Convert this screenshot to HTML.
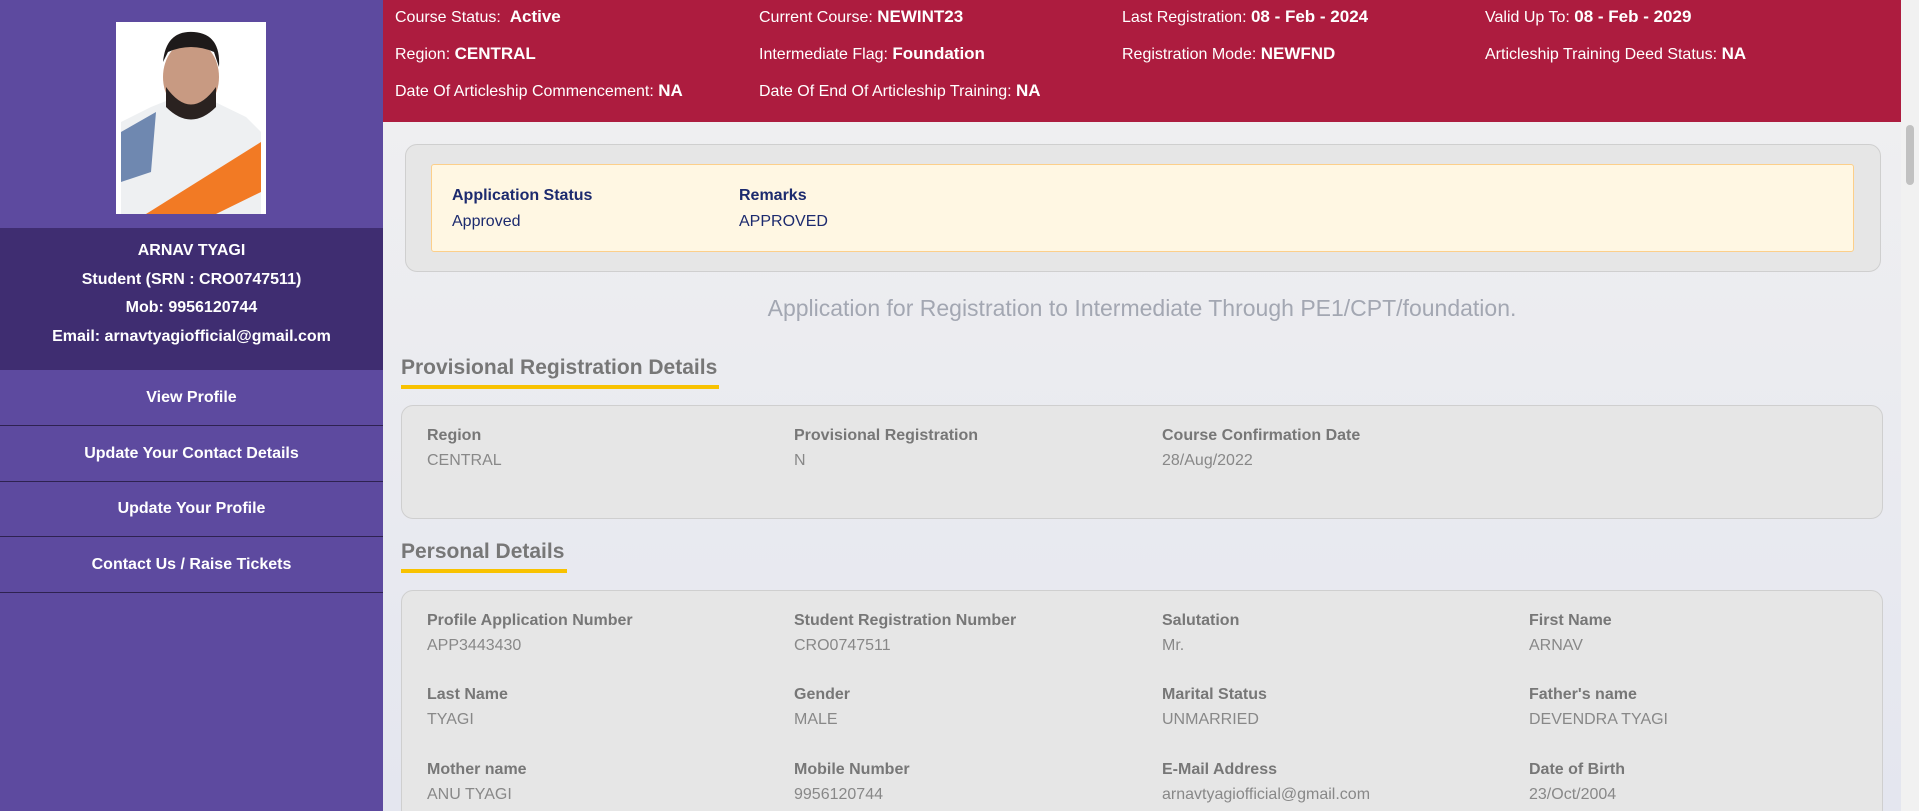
<!DOCTYPE html>
<html style="overflow:hidden;width:1919px;height:811px"><head><meta charset="utf-8"><style>
*{margin:0;padding:0;box-sizing:border-box}
body{width:1919px;height:811px;overflow:hidden;font-family:"Liberation Sans",Arial,sans-serif;background:#e9e9ef;position:relative}
.side{position:absolute;left:0;top:0;width:383px;height:811px;background:#5d4a9f}
.photo{position:absolute;left:116px;top:22px;width:150px;height:192px;background:#fff}
.info{position:absolute;left:0;top:228px;width:383px;height:142px;background:#3f2d71;color:#fff;font-weight:bold;font-size:16px;text-align:center}
.info div{position:absolute;width:100%}
.menu{position:absolute;left:0;width:383px;height:56px;border-bottom:1.5px solid #2e2250;color:#fff;font-weight:bold;font-size:16px;text-align:center;line-height:56px}
.hdr{position:absolute;left:383px;top:0;width:1518px;height:122px;background:#ad1c3f;color:#fff;font-size:16px}
.hdr span{position:absolute;white-space:nowrap}
.hdr b{font-size:17px}
.main{position:absolute;left:383px;top:122px;width:1518px;height:689px;background:linear-gradient(#efeff1,#e4e6ef)}
.sb{position:absolute;left:1901px;top:0;width:18px;height:811px;background:#f1f1f1}
.sb div{position:absolute;left:5px;top:125px;width:8px;height:60px;background:#c1c1c1;border-radius:4px}
.box{position:absolute;background:#e6e6e6;border:1.5px solid #cfcfcf;border-radius:12px}
.t{position:absolute;white-space:nowrap;font-size:16px}
.l{font-weight:bold;color:#777}
.v{color:#888}
.h{position:absolute;font-weight:bold;font-size:21px;color:#777;white-space:nowrap}
.u{position:absolute;height:4px;background:#f8c200}
</style></head><body>
<div class="side">
 <div class="photo"><svg width="150" height="192" viewBox="0 0 150 192">
  <rect width="150" height="192" fill="#fff"/>
  <path d="M5 100 L35 85 L60 75 L95 78 L130 95 L145 110 L145 192 L5 192Z" fill="#eef0f2"/>
  <path d="M5 110 L40 90 L35 150 L5 160Z" fill="#6f88b0"/>
  <path d="M30 192 L145 120 L145 170 L100 192Z" fill="#f27a24"/>
  <ellipse cx="75" cy="55" rx="28" ry="36" fill="#c89a82"/>
  <path d="M47 40 Q50 8 78 10 Q105 12 103 45 L98 30 Q75 20 52 30Z" fill="#1e1a1a"/>
  <path d="M50 65 Q75 100 100 65 L100 85 Q75 110 50 85Z" fill="#2a2220"/>
 </svg></div>
 <div class="info">
  <div style="top:14px">ARNAV TYAGI</div>
  <div style="top:43px">Student (SRN : CRO0747511)</div>
  <div style="top:71px">Mob: 9956120744</div>
  <div style="top:100px">Email: arnavtyagiofficial@gmail.com</div>
 </div>
 <div class="menu" style="top:370px">View Profile</div>
 <div class="menu" style="top:426px">Update Your Contact Details</div>
 <div class="menu" style="top:481px">Update Your Profile</div>
 <div class="menu" style="top:537px">Contact Us / Raise Tickets</div>
</div>
<div class="hdr">
 <span style="left:12px;top:7px">Course Status:&nbsp; <b>Active</b></span>
 <span style="left:376px;top:7px">Current Course: <b>NEWINT23</b></span>
 <span style="left:739px;top:7px">Last Registration: <b>08 - Feb - 2024</b></span>
 <span style="left:1102px;top:7px">Valid Up To: <b>08 - Feb - 2029</b></span>
 <span style="left:12px;top:44px">Region: <b>CENTRAL</b></span>
 <span style="left:376px;top:44px">Intermediate Flag: <b>Foundation</b></span>
 <span style="left:739px;top:44px">Registration Mode: <b>NEWFND</b></span>
 <span style="left:1102px;top:44px">Articleship Training Deed Status: <b>NA</b></span>
 <span style="left:12px;top:81px">Date Of Articleship Commencement: <b>NA</b></span>
 <span style="left:376px;top:81px">Date Of End Of Articleship Training: <b>NA</b></span>
</div>
<div class="main"></div>
<div class="box" style="left:405px;top:144px;width:1476px;height:128px"></div>
<div style="position:absolute;left:431px;top:164px;width:1423px;height:88px;background:#fff7e3;border:1.5px solid #fccf8a;border-radius:3px"></div>
<div class="t" style="left:452px;top:187px;font-weight:bold;color:#1c2a6e">Application Status</div>
<div class="t" style="left:452px;top:213px;color:#1c2a6e">Approved</div>
<div class="t" style="left:739px;top:187px;font-weight:bold;color:#1c2a6e">Remarks</div>
<div class="t" style="left:739px;top:213px;color:#1c2a6e">APPROVED</div>
<div class="t" style="left:383px;width:1518px;text-align:center;top:295px;font-size:23px;color:#a3a7b2;font-weight:300">Application for Registration to Intermediate Through PE1/CPT/foundation.</div>
<div class="h" style="left:401px;top:356px">Provisional Registration Details</div>
<div class="u" style="left:401px;top:385px;width:318px"></div>
<div class="box" style="left:401px;top:405px;width:1482px;height:114px"></div>
<div class="t l" style="left:427px;top:427px">Region</div><div class="t v" style="left:427px;top:452px">CENTRAL</div>
<div class="t l" style="left:794px;top:427px">Provisional Registration</div><div class="t v" style="left:794px;top:452px">N</div>
<div class="t l" style="left:1162px;top:427px">Course Confirmation Date</div><div class="t v" style="left:1162px;top:452px">28/Aug/2022</div>
<div class="h" style="left:401px;top:540px">Personal Details</div>
<div class="u" style="left:401px;top:569px;width:166px"></div>
<div class="box" style="left:401px;top:590px;width:1482px;height:232px"></div>
<div class="t l" style="left:427px;top:612px">Profile Application Number</div><div class="t v" style="left:427px;top:637px">APP3443430</div>
<div class="t l" style="left:794px;top:612px">Student Registration Number</div><div class="t v" style="left:794px;top:637px">CRO0747511</div>
<div class="t l" style="left:1162px;top:612px">Salutation</div><div class="t v" style="left:1162px;top:637px">Mr.</div>
<div class="t l" style="left:1529px;top:612px">First Name</div><div class="t v" style="left:1529px;top:637px">ARNAV</div>
<div class="t l" style="left:427px;top:686px">Last Name</div><div class="t v" style="left:427px;top:711px">TYAGI</div>
<div class="t l" style="left:794px;top:686px">Gender</div><div class="t v" style="left:794px;top:711px">MALE</div>
<div class="t l" style="left:1162px;top:686px">Marital Status</div><div class="t v" style="left:1162px;top:711px">UNMARRIED</div>
<div class="t l" style="left:1529px;top:686px">Father's name</div><div class="t v" style="left:1529px;top:711px">DEVENDRA TYAGI</div>
<div class="t l" style="left:427px;top:761px">Mother name</div><div class="t v" style="left:427px;top:786px">ANU TYAGI</div>
<div class="t l" style="left:794px;top:761px">Mobile Number</div><div class="t v" style="left:794px;top:786px">9956120744</div>
<div class="t l" style="left:1162px;top:761px">E-Mail Address</div><div class="t v" style="left:1162px;top:786px">arnavtyagiofficial@gmail.com</div>
<div class="t l" style="left:1529px;top:761px">Date of Birth</div><div class="t v" style="left:1529px;top:786px">23/Oct/2004</div>
<div class="sb"><div></div></div>
</body></html>
